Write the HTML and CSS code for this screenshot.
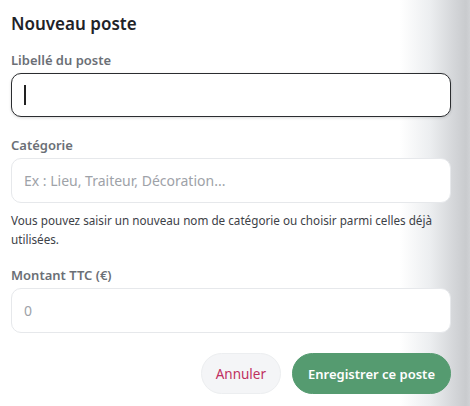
FILE: index.html
```html
<!DOCTYPE html>
<html lang="fr">
<head>
<meta charset="utf-8">
<title>Nouveau poste</title>
<link rel="stylesheet" href="styles.css">
</head>
<body>
<div class="modal">
  <h2 class="title">Nouveau poste</h2>
  <div class="field field-first">
    <label class="label">Libellé du poste</label>
    <div class="input input-focus"><span class="caret"></span></div>
  </div>
  <div class="field">
    <label class="label">Catégorie</label>
    <div class="input"><span class="placeholder">Ex : Lieu, Traiteur, Décoration...</span></div>
    <p class="help">Vous pouvez saisir un nouveau nom de catégorie ou choisir parmi celles déjà utilisées.</p>
  </div>
  <div class="field">
    <label class="label">Montant TTC (€)</label>
    <div class="input"><span class="placeholder">0</span></div>
  </div>
  <div class="actions">
    <button class="btn btn-cancel">Annuler</button>
    <button class="btn btn-save">Enregistrer ce poste</button>
  </div>
</div>
</body>
</html>
```
FILE: styles.css
```css
html, body {
  margin: 0;
  height: 100%;
}
body {
  background: linear-gradient(to right, #ffffff 0px, #ffffff 400px, #eceef0 430px, #d3d5d8 455px, #c9cbce 466px, #d0d2d5 470px);
  font-family: "Noto Sans", "Open Sans", sans-serif;
  color: #1f2328;
}
.modal {
  width: 440px;
  padding: 12px 0 0 11px;
}
.title {
  margin: 0 0 15px;
  font-size: 17px;
  font-weight: 600;
  line-height: 24px;
  color: #1f2328;
}
.field {
  display: flex;
  flex-direction: column;
  margin-bottom: 17px;
}
.field-first {
  margin-bottom: 19px;
}
.label {
  font-size: 13px;
  font-weight: 600;
  color: #6b6f76;
  line-height: 18px;
  margin-bottom: 4px;
}
.input {
  box-sizing: border-box;
  height: 45px;
  border: 1px solid #e6e8eb;
  border-radius: 10px;
  padding: 0 12px;
  display: flex;
  align-items: center;
  background: #fff;
}
.input-focus {
  height: 44px;
  border: 1.5px solid #2b2d30;
  box-shadow: 0 1px 3px rgba(0,0,0,0.15);
}
.caret {
  width: 1.5px;
  height: 20px;
  background: #222;
}
.placeholder {
  font-size: 14px;
  color: #9ea2a8;
}
.help {
  margin: 8px 0 0;
  font-size: 11.7px;
  line-height: 19px;
  color: #3d4147;
}
.actions {
  display: flex;
  justify-content: flex-end;
  gap: 11px;
  margin-top: 20px;
}
.btn {
  font-family: inherit;
  height: 41px;
  border-radius: 21px;
  padding: 0 15px;
  cursor: pointer;
}
.btn-cancel {
  font-size: 13.5px;
  padding: 0 14px;
  background: #f4f5f7;
  border: 1px solid #eceef0;
  color: #c0305f;
}
.btn-save {
  font-size: 13px;
  padding: 0 15px;
  background: #559b70;
  border: 1px solid #559b70;
  color: #fff;
  font-weight: 600;
}
```
